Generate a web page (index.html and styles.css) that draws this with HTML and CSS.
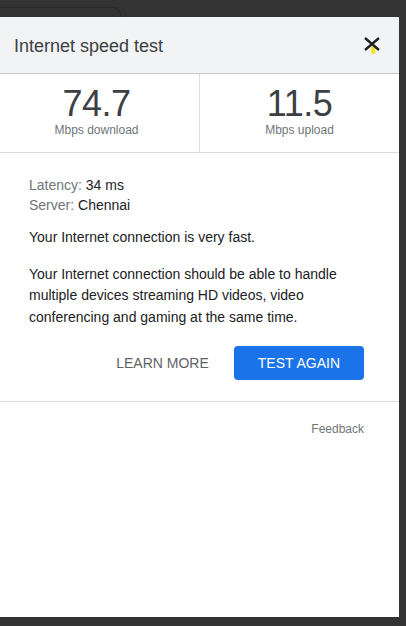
FILE: index.html
```html
<!DOCTYPE html>
<html lang="en">
<head>
  <meta charset="UTF-8">
  <meta name="viewport" content="width=device-width, initial-scale=1.0">
  <title>Internet speed test</title>
  <link rel="stylesheet" href="styles.css">
</head>
<body>
  <div class="tab"></div>

  <div class="panel">
    <div class="panel-header">
      <h2 class="title">Internet speed test</h2>
      <button class="close" aria-label="Close">
        <svg width="20" height="22" viewBox="0 0 20 22">
          <path d="M9 11 L13 10.5 L13.5 17.5 L9.5 18 Z" fill="#f3e21c"/>
          <path d="M3 2 L17 14 M17 2 L3 14" stroke="#202124" stroke-width="2.4" fill="none"/>
        </svg>
      </button>
    </div>

    <div class="stats">
      <div class="stat">
        <div class="stat-value">74.7</div>
        <div class="stat-label">Mbps download</div>
      </div>
      <div class="stat">
        <div class="stat-value">11.5</div>
        <div class="stat-label">Mbps upload</div>
      </div>
    </div>

    <div class="details">
      <div class="meta">
        <div><span class="meta-key">Latency:</span> 34 ms</div>
        <div><span class="meta-key">Server:</span> Chennai</div>
      </div>
      <p>Your Internet connection is very fast.</p>
      <p>Your Internet connection should be able to handle multiple devices streaming HD videos, video conferencing and gaming at the same time.</p>
      <div class="actions">
        <button class="btn-text">LEARN MORE</button>
        <button class="btn-primary">TEST AGAIN</button>
      </div>
    </div>

    <div class="footer">
      <a class="feedback" href="#">Feedback</a>
    </div>
  </div>
</body>
</html>
```

FILE: styles.css
```css
body {
  font-family: "Liberation Sans", Arial, sans-serif;
  margin: 0;
  padding: 0;
  background-color: #333;
  overflow: hidden;
  color: #202124;
}

.tab {
  width: 120px;
  height: 9px;
  margin-top: 7px;
  border-top: 1px solid #2a2a2a;
  border-right: 1px solid #2a2a2a;
  border-top-right-radius: 8px;
  box-sizing: content-box;
}

.panel {
  margin-left: -6px;
  width: 405px;
  height: 600px;
  background: #fff;
}

.panel-header {
  height: 56px;
  display: flex;
  align-items: center;
  justify-content: space-between;
  padding-left: 20px;
  background-color: #f1f3f4;
  border-bottom: 1px solid #c8c8c8;
}

.title {
  margin: 2px 0 0;
  font-size: 18px;
  font-weight: normal;
  color: #3c4043;
}

.close {
  background: none;
  border: none;
  padding: 0;
  margin: 3px 17px 0 0;
  width: 20px;
  height: 22px;
  cursor: pointer;
}

.close svg {
  display: block;
}

.stats {
  display: grid;
  grid-template-columns: 206px 1fr;
  border-bottom: 1px solid #dadce0;
}

.stat {
  height: 78px;
  padding-top: 10px;
  box-sizing: border-box;
  text-align: center;
}

.stat:first-child {
  border-right: 1px solid #dadce0;
}

.stat-value {
  font-size: 36px;
  line-height: 40px;
  letter-spacing: -0.5px;
  color: #3c4043;
}

.stat-label {
  font-size: 12px;
  line-height: 12px;
  color: #70757a;
}

.details {
  padding: 22px 35px 21px;
  font-size: 14px;
}

.meta {
  line-height: 20px;
}

.meta-key {
  color: #70757a;
}

.details p {
  margin: 12px 0 0;
  line-height: 21.5px;
}

.details p + p {
  margin-top: 15px;
}

.actions {
  display: flex;
  justify-content: flex-end;
  align-items: center;
  margin-top: 18px;
}

.btn-text,
.btn-primary {
  font-family: inherit;
  font-size: 14px;
  height: 34px;
  border: none;
  border-radius: 4px;
  white-space: nowrap;
  cursor: pointer;
}

.btn-text {
  padding: 0 25px;
  background: none;
  color: #5f6368;
}

.btn-primary {
  padding: 0 24px;
  background-color: #1a73e8;
  color: #fff;
}

.footer {
  border-top: 1px solid #dadce0;
  padding: 20px 35px;
  text-align: right;
  font-size: 12px;
  line-height: 14px;
}

.feedback {
  color: #70757a;
  text-decoration: none;
}
```
